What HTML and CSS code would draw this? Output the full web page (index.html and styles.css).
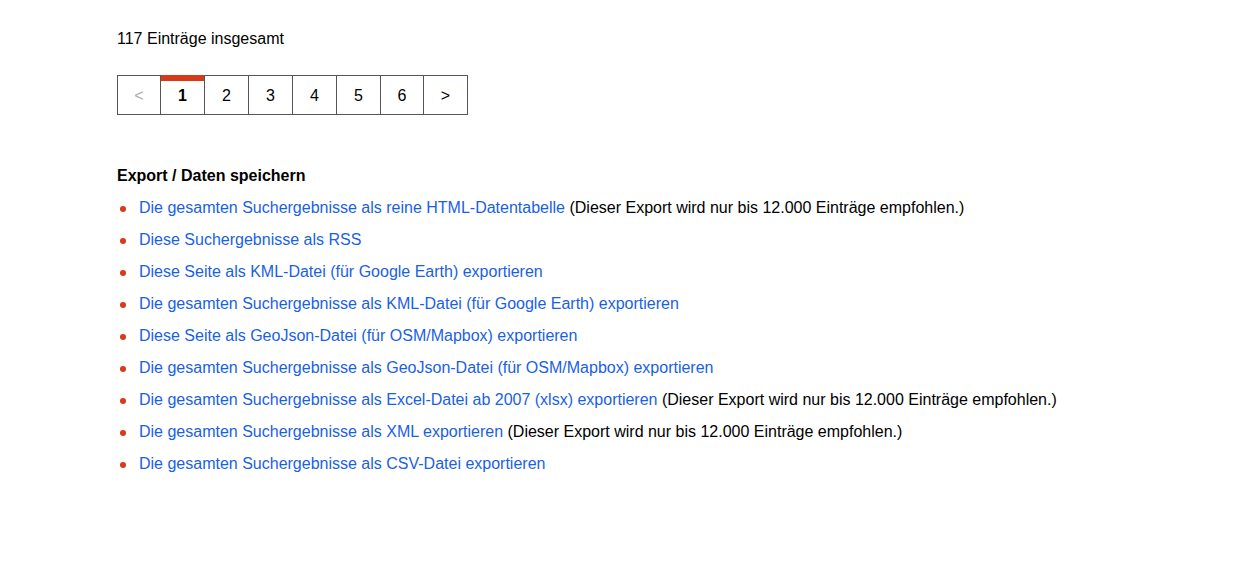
FILE: index.html
```html
<!DOCTYPE html>
<html lang="de">
<head>
<meta charset="utf-8">
<link rel="stylesheet" href="styles.css">
</head>
<body>
<div class="page">
  <p class="total">117 Einträge insgesamt</p>
  <div class="pager">
    <span class="cell disabled">&lt;</span>
    <span class="cell active">1</span>
    <a class="cell" href="#">2</a>
    <a class="cell" href="#">3</a>
    <a class="cell" href="#">4</a>
    <a class="cell" href="#">5</a>
    <a class="cell narrow" href="#">6</a>
    <a class="cell" href="#">&gt;</a>
  </div>
  <h3 class="heading">Export / Daten speichern</h3>
  <ul class="exports">
    <li><a href="#">Die gesamten Suchergebnisse als reine HTML-Datentabelle</a> (Dieser Export wird nur bis 12.000 Einträge empfohlen.)</li>
    <li><a href="#">Diese Suchergebnisse als RSS</a></li>
    <li><a href="#">Diese Seite als KML-Datei (für Google Earth) exportieren</a></li>
    <li><a href="#">Die gesamten Suchergebnisse als KML-Datei (für Google Earth) exportieren</a></li>
    <li><a href="#">Diese Seite als GeoJson-Datei (für OSM/Mapbox) exportieren</a></li>
    <li><a href="#">Die gesamten Suchergebnisse als GeoJson-Datei (für OSM/Mapbox) exportieren</a></li>
    <li><a href="#">Die gesamten Suchergebnisse als Excel-Datei ab 2007 (xlsx) exportieren</a> (Dieser Export wird nur bis 12.000 Einträge empfohlen.)</li>
    <li><a href="#">Die gesamten Suchergebnisse als XML exportieren</a> (Dieser Export wird nur bis 12.000 Einträge empfohlen.)</li>
    <li><a href="#">Die gesamten Suchergebnisse als CSV-Datei exportieren</a></li>
  </ul>
</div>
</body>
</html>
```

FILE: styles.css
```css
html, body {
  margin: 0;
  padding: 0;
  background: #ffffff;
}
body {
  font-family: "Liberation Sans", Arial, sans-serif;
  font-size: 16px;
  color: #000000;
}
.page {
  padding: 29px 0 0 117px;
}
.total {
  margin: 0;
  line-height: 20px;
}
.pager {
  display: flex;
  margin-top: 26px;
  width: max-content;
  border: 1px solid #555555;
}
.cell {
  position: relative;
  box-sizing: border-box;
  width: 44px;
  height: 38px;
  padding-top: 2px;
  display: flex;
  align-items: center;
  justify-content: center;
  color: #000000;
  text-decoration: none;
  border-left: 1px solid #555555;
  font-size: 16px;
}
.cell:first-child {
  border-left: none;
  width: 42px;
}
.cell.narrow {
  width: 43px;
}
.cell.disabled {
  color: #aaaaaa;
}
.cell.active {
  font-weight: bold;
}
.cell.active::before {
  content: "";
  position: absolute;
  left: 0;
  right: 0;
  top: -1px;
  height: 6px;
  background: #d63a19;
}
.heading {
  margin: 51px 0 0 0;
  font-size: 16px;
  font-weight: bold;
  line-height: 20px;
}
.exports {
  list-style: none;
  margin: 6px 0 0 0;
  padding: 0;
}
.exports li {
  position: relative;
  padding-left: 22px;
  line-height: 32px;
}
.exports li::before {
  content: "";
  position: absolute;
  left: 3px;
  top: 14px;
  width: 6px;
  height: 6px;
  border-radius: 50%;
  background: #d63a19;
}
.exports a {
  color: #1a5fe6;
  text-decoration: none;
}
```
